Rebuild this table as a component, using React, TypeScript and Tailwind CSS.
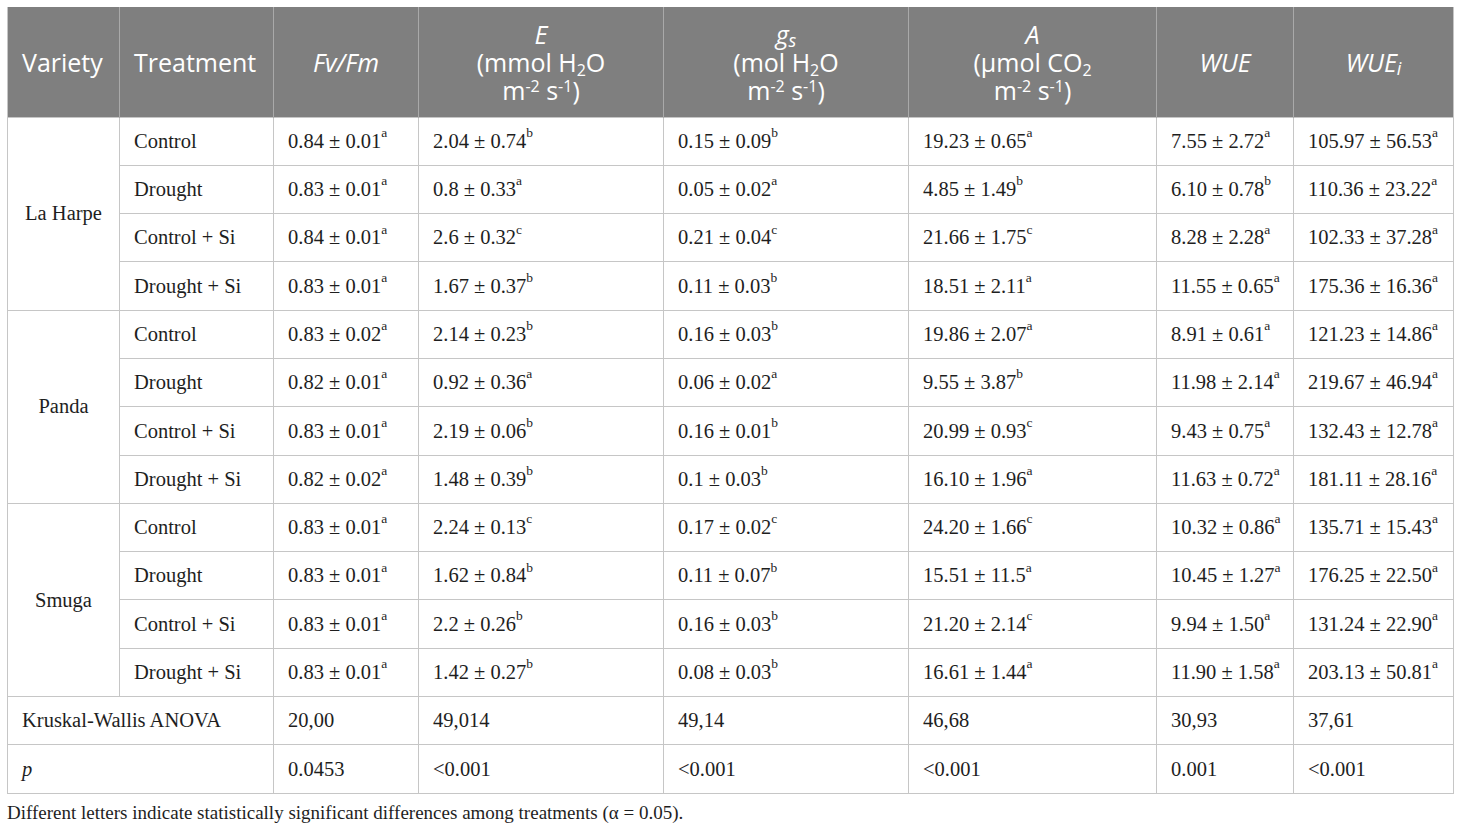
import React from "react";

type Row = { t: string; v: [string, string][] };

const groups: { name: string; rows: Row[] }[] = [
  {
    name: "La Harpe",
    rows: [
      { t: "Control", v: [["0.84 ± 0.01", "a"], ["2.04 ± 0.74", "b"], ["0.15 ± 0.09", "b"], ["19.23 ± 0.65", "a"], ["7.55 ± 2.72", "a"], ["105.97 ± 56.53", "a"]] },
      { t: "Drought", v: [["0.83 ± 0.01", "a"], ["0.8 ± 0.33", "a"], ["0.05 ± 0.02", "a"], ["4.85 ± 1.49", "b"], ["6.10 ± 0.78", "b"], ["110.36 ± 23.22", "a"]] },
      { t: "Control + Si", v: [["0.84 ± 0.01", "a"], ["2.6 ± 0.32", "c"], ["0.21 ± 0.04", "c"], ["21.66 ± 1.75", "c"], ["8.28 ± 2.28", "a"], ["102.33 ± 37.28", "a"]] },
      { t: "Drought + Si", v: [["0.83 ± 0.01", "a"], ["1.67 ± 0.37", "b"], ["0.11 ± 0.03", "b"], ["18.51 ± 2.11", "a"], ["11.55 ± 0.65", "a"], ["175.36 ± 16.36", "a"]] },
    ],
  },
  {
    name: "Panda",
    rows: [
      { t: "Control", v: [["0.83 ± 0.02", "a"], ["2.14 ± 0.23", "b"], ["0.16 ± 0.03", "b"], ["19.86 ± 2.07", "a"], ["8.91 ± 0.61", "a"], ["121.23 ± 14.86", "a"]] },
      { t: "Drought", v: [["0.82 ± 0.01", "a"], ["0.92 ± 0.36", "a"], ["0.06 ± 0.02", "a"], ["9.55 ± 3.87", "b"], ["11.98 ± 2.14", "a"], ["219.67 ± 46.94", "a"]] },
      { t: "Control + Si", v: [["0.83 ± 0.01", "a"], ["2.19 ± 0.06", "b"], ["0.16 ± 0.01", "b"], ["20.99 ± 0.93", "c"], ["9.43 ± 0.75", "a"], ["132.43 ± 12.78", "a"]] },
      { t: "Drought + Si", v: [["0.82 ± 0.02", "a"], ["1.48 ± 0.39", "b"], ["0.1 ± 0.03", "b"], ["16.10 ± 1.96", "a"], ["11.63 ± 0.72", "a"], ["181.11 ± 28.16", "a"]] },
    ],
  },
  {
    name: "Smuga",
    rows: [
      { t: "Control", v: [["0.83 ± 0.01", "a"], ["2.24 ± 0.13", "c"], ["0.17 ± 0.02", "c"], ["24.20 ± 1.66", "c"], ["10.32 ± 0.86", "a"], ["135.71 ± 15.43", "a"]] },
      { t: "Drought", v: [["0.83 ± 0.01", "a"], ["1.62 ± 0.84", "b"], ["0.11 ± 0.07", "b"], ["15.51 ± 11.5", "a"], ["10.45 ± 1.27", "a"], ["176.25 ± 22.50", "a"]] },
      { t: "Control + Si", v: [["0.83 ± 0.01", "a"], ["2.2 ± 0.26", "b"], ["0.16 ± 0.03", "b"], ["21.20 ± 2.14", "c"], ["9.94 ± 1.50", "a"], ["131.24 ± 22.90", "a"]] },
      { t: "Drought + Si", v: [["0.83 ± 0.01", "a"], ["1.42 ± 0.27", "b"], ["0.08 ± 0.03", "b"], ["16.61 ± 1.44", "a"], ["11.90 ± 1.58", "a"], ["203.13 ± 50.81", "a"]] },
    ],
  },
];

const base = "border border-[#c6c6c6] h-[48.3px] px-[14px] py-0 align-middle whitespace-nowrap";
const td = base + " text-left";
const th = "border-x border-[#a9a9a9] bg-[#7f7f7f] text-white font-normal text-center align-middle px-2 leading-[28px] whitespace-nowrap";

function Sup({ c }: { c: string }) {
  return <sup className="text-[13.5px] relative top-[-3px] leading-none" style={{ verticalAlign: "super" }}>{c}</sup>;
}

const subCls = "text-[16px] relative top-[4px] align-baseline leading-none";
const supCls = "text-[16px] relative top-[-8px] align-baseline leading-none";

export default function App() {
  return (
    <div className="w-[1460px] h-[831px] bg-white pt-[7px] pl-[7px] overflow-hidden" style={{ fontFamily: "'Liberation Serif', serif" }}>
      <table className="table-fixed border-collapse w-[1446px] text-[20.5px] text-[#1e1e1e]">
        <colgroup>
          <col className="w-[112px]" />
          <col className="w-[154px]" />
          <col className="w-[145px]" />
          <col className="w-[245px]" />
          <col className="w-[245px]" />
          <col className="w-[248px]" />
          <col className="w-[137px]" />
          <col className="w-[160px]" />
        </colgroup>
        <thead>
          <tr className="h-[110px] text-[25px]" style={{ fontFamily: "'Open Sans', sans-serif" }}>
            <th className={th + " border-l-[#c6c6c6] text-left pl-[14px]"}>Variety</th>
            <th className={th + " text-left pl-[14px]"}>Treatment</th>
            <th className={th}><i>Fv/Fm</i></th>
            <th className={th}>
              <div><i>E</i></div>
              <div>(mmol H<sub className={subCls}>2</sub>O</div>
              <div>m<sup className={supCls}>-2</sup> s<sup className={supCls}>-1</sup>)</div>
            </th>
            <th className={th}>
              <div><i>g<sub className="text-[18px] relative top-[3px] align-baseline leading-none">s</sub></i></div>
              <div>(mol H<sub className={subCls}>2</sub>O</div>
              <div>m<sup className={supCls}>-2</sup> s<sup className={supCls}>-1</sup>)</div>
            </th>
            <th className={th}>
              <div><i>A</i></div>
              <div>(µmol CO<sub className={subCls}>2</sub></div>
              <div>m<sup className={supCls}>-2</sup> s<sup className={supCls}>-1</sup>)</div>
            </th>
            <th className={th}><i>WUE</i></th>
            <th className={th + " border-r-[#c6c6c6]"}><i>WUE<sub className="text-[18px] relative top-[3px] align-baseline leading-none">i</sub></i></th>
          </tr>
        </thead>
        <tbody>
          {groups.map((g) =>
            g.rows.map((r, i) => (
              <tr key={g.name + r.t}>
                {i === 0 && (
                  <td rowSpan={4} className={base + " text-center"}>{g.name}</td>
                )}
                <td className={td}>{r.t}</td>
                {r.v.map(([val, s], j) => (
                  <td key={j} className={td}>
                    {val}
                    <Sup c={s} />
                  </td>
                ))}
              </tr>
            ))
          )}
          <tr>
            <td colSpan={2} className={td}>Kruskal-Wallis ANOVA</td>
            <td className={td}>20,00</td>
            <td className={td}>49,014</td>
            <td className={td}>49,14</td>
            <td className={td}>46,68</td>
            <td className={td}>30,93</td>
            <td className={td}>37,61</td>
          </tr>
          <tr>
            <td colSpan={2} className={td}><i>p</i></td>
            <td className={td}>0.0453</td>
            <td className={td}>&lt;0.001</td>
            <td className={td}>&lt;0.001</td>
            <td className={td}>&lt;0.001</td>
            <td className={td}>0.001</td>
            <td className={td}>&lt;0.001</td>
          </tr>
        </tbody>
      </table>
      <p className="text-[19px] text-[#1e1e1e] mt-[7px] leading-[24px]">
        Different letters indicate statistically significant differences among treatments (α = 0.05).
      </p>
    </div>
  );
}
